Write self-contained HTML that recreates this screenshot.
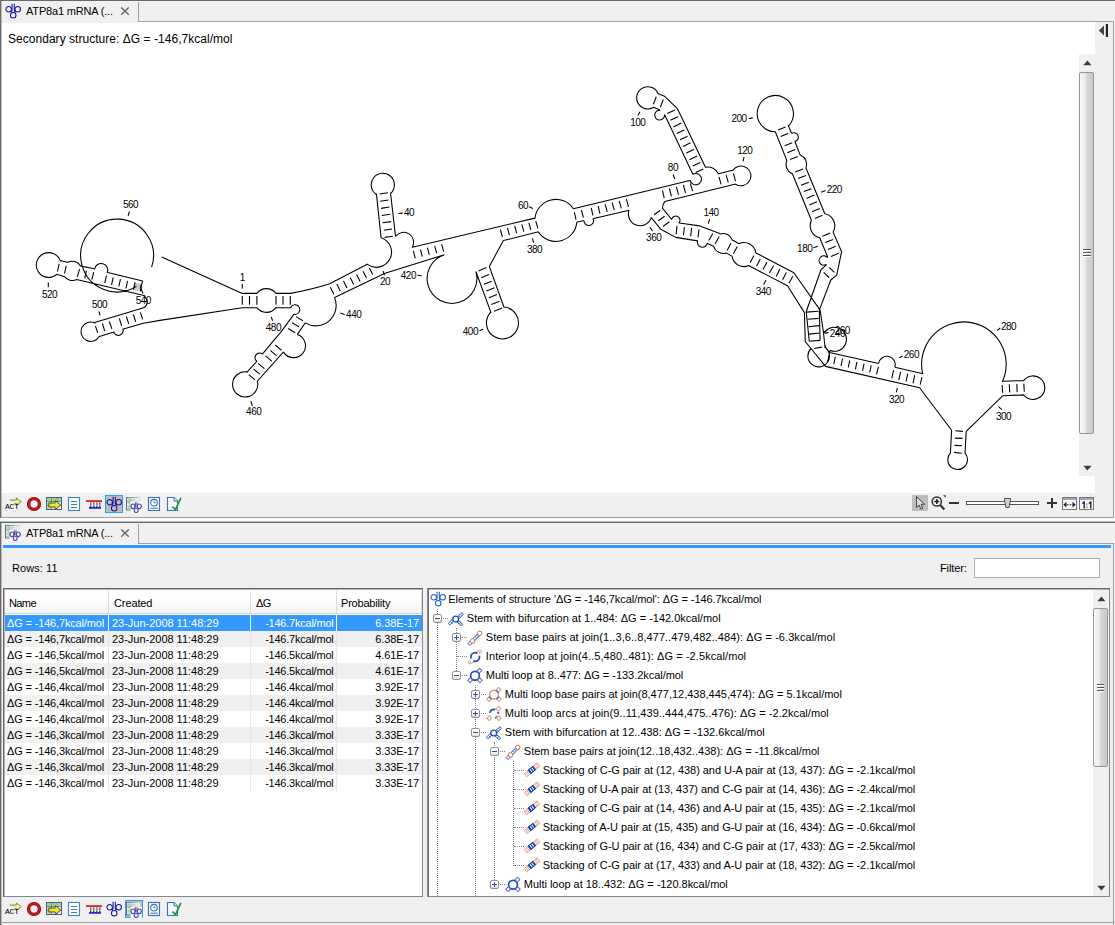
<!DOCTYPE html>
<html>
<head>
<meta charset="utf-8">
<title>ATP8a1 mRNA</title>
<style>
html,body{margin:0;padding:0;}
body{width:1115px;height:925px;overflow:hidden;background:#f0f0f0;font-family:"Liberation Sans",sans-serif;font-size:11px;color:#000;position:relative;}
.a{position:absolute;}
.t{position:absolute;white-space:nowrap;line-height:14px;height:14px;}
.w{color:#fff;}
.ln{position:absolute;background:#a0a0a0;}
.dk{position:absolute;background:#696969;}
.row{position:absolute;left:5px;width:417px;height:16px;}
.vs{position:absolute;width:1px;background:#e3e3e3;}
.dv{position:absolute;width:0;border-left:1px dotted #808080;}
.dh{position:absolute;height:0;border-top:1px dotted #808080;}
.ex{position:absolute;width:7px;height:7px;border:1px solid #919191;border-radius:2px;background:linear-gradient(#fff 0%,#fff 50%,#dcdcdc 100%);}
.ex b{position:absolute;left:1px;top:3px;width:5px;height:1px;background:#2d4f9e;}
.ex i{position:absolute;left:3px;top:1px;width:1px;height:5px;background:#2d4f9e;}
.sb{position:absolute;background:#f0f0f0;}
.th{position:absolute;border:1px solid #979797;border-radius:2px;background:linear-gradient(90deg,#f6f6f6 0%,#ececec 40%,#d6d6d8 52%,#c9c9cc 100%);box-sizing:border-box;}
.gr{position:absolute;height:1px;width:8px;background:#555;box-shadow:0 1px 0 #fff;}
</style>
</head>
<body>
<svg width="0" height="0" style="position:absolute">
<defs>
<symbol id="db" viewBox="0 0 16 16"><g fill="none" stroke="currentColor" stroke-width="1.05"><circle cx="3.7" cy="6.3" r="2.75"/><circle cx="12.700" cy="6.3" r="2.75"/><circle cx="8.2" cy="12.2" r="2.75"/><path d="M7.1 0.8v5.6q0 2-1 3M9.3 0.8v5.6q0 2 1 3"/></g></symbol>
<symbol id="tbldb" viewBox="0 0 16 16"><linearGradient id="tg" x1="0" x2="1" y1="0" y2="0"><stop offset="0" stop-color="#6c6898"/><stop offset="1" stop-color="#d8d8e6"/></linearGradient><rect x="0.5" y="0.5" width="13.5" height="12.5" fill="#f4f4fa" stroke="url(#tg)" stroke-width="1"/><path d="M4.200 1v12M1 4.200h13" stroke="url(#tg)" stroke-width=".7" fill="none"/><path d="M1.500 1.700h2.200v1.900H1.500zM1.500 4.900h2.200v1.900H1.500zM1.500 7.900h2.200v1.900H1.500zM1.500 10.800h2.200v1.700H1.500z" fill="#8cdc74"/><path d="M4.900 1.700h4.300v1.800H4.900z" fill="#a6e694"/><path d="M10 1.700h3.500v1.800H10z" fill="#d6f2cc"/><rect x="4.600" y="4.600" width="11.400" height="11.400" fill="#fff" opacity=".92"/><g fill="none" stroke="#4c48ac" stroke-width="1.150"><ellipse cx="7" cy="9.300" rx="2" ry="2.300"/><ellipse cx="13.300" cy="9.300" rx="2" ry="2.300"/><circle cx="10.200" cy="13.500" r="2"/><path d="M9.300 5.200v5.400M11 5.200v5.400"/></g></symbol>
<symbol id="act" viewBox="0 0 18 16"><path d="M5.500 3.800h6.200V1.900l4.600 3.400-4.600 3.400V7H10" fill="#f3f1a2" stroke="#76762a" stroke-width=".85"/><text x="1" y="12.600" font-family="Liberation Mono, monospace" font-size="7.600" fill="#000" letter-spacing="-0.250">ACT</text></symbol>
<symbol id="ring" viewBox="0 0 16 16"><circle cx="8" cy="8" r="5.400" fill="none" stroke="#7a0d12" stroke-width="3.400"/><circle cx="8" cy="8" r="5.400" fill="none" stroke="#cf1820" stroke-width="2"/></symbol>
<symbol id="tblarrow" viewBox="0 0 16 16"><rect x="0.5" y="1.5" width="15" height="12" fill="#e4efff" stroke="#55558c" stroke-width="1"/><path d="M1 2h4v3H1zM6 2h4.5v3H6zM11.5 2h3.5v3h-3.5z" fill="#8fe07e"/><path d="M1 6h4v3H1zM1 10h4v3H1z" fill="#a8e898"/><path d="M5.5 2v11M11 2v11M1 5.5h14M1 9.5h14" stroke="#55558c" stroke-width=".7" fill="none"/><path d="M2.8 7h6.4V4.6L14.8 9 9.2 13.6V11H2.8z" fill="#e9e533" stroke="#55561e" stroke-width="1"/></symbol>
<symbol id="doc" viewBox="0 0 16 16"><rect x="2.5" y="1.5" width="11" height="13" fill="#fdfeff" stroke="#4a80c4" stroke-width="1.1"/><path d="M5 5.5h6M5 8.5h6M5 11.5h6" stroke="#3d78c2" stroke-width="1"/></symbol>
<symbol id="redblue" viewBox="0 0 16 16"><rect x="0" y="4.2" width="16" height="1.8" fill="#d8232a"/><rect x="3" y="11" width="12" height="1.8" fill="#2a2ad0"/><path d="M4.8 6.5v4.5M7.8 6.5v4.5M10.9 6.5v4.5M13.8 6.5v4.5" stroke="#111" stroke-width="1.1" stroke-dasharray="1.3 .5"/><rect x="6.5" y="14.8" width="3.5" height=".7" fill="#ddd"/></symbol>
<symbol id="clock" viewBox="0 0 16 16"><rect x="2.5" y="1.5" width="11" height="13" fill="#f4f8fd" stroke="#3d72b6" stroke-width="1.1"/><circle cx="8" cy="6.700" r="3.300" fill="#fff" stroke="#3d72b6" stroke-width="1.100"/><path d="M8 4.600v2.200h1.800" stroke="#3d72b6" stroke-width=".9" fill="none"/><path d="M4.4 12.2h7.4" stroke="#3d72b6" stroke-width="1"/></symbol>
<symbol id="check" viewBox="0 0 16 16"><path d="M1.5 1.5h6.5l3.5 3.5v9.500h-10z" fill="#f8fbff" stroke="#3d72b6" stroke-width="1.1"/><path d="M8 1.500v3.500h3.500" fill="#dfe9f6" stroke="#3d72b6" stroke-width="1"/><path d="M6.400 10.700l3 3L14.900 1.800" fill="none" stroke="#1e9a36" stroke-width="1.700"/></symbol>
<symbol id="bif" viewBox="0 0 16 16"><g stroke="#1f4fc0" fill="#fff" stroke-width="1"><path d="M9.200 6.300l4.600-4.600 1.600 1.600-4.600 4.600zM6.400 9.300l-4.600 4.600-1.500-1.500 4.600-4.600zM9.700 8.800l5 4.300-1.400 1.600-5-4.300z"/><path d="M10.900 4.700l1.600 1.600M12.400 3.200l1.600 1.600M4.700 9.400l1.500 1.500M3 11l1.600 1.600M11 10l-1.400 1.600M12.800 11.500l-1.400 1.600" fill="none" stroke-width=".8"/><circle cx="7.700" cy="8" r="2.900" stroke-width="1.300"/></g></symbol>
<symbol id="stembp" viewBox="0 0 16 16"><g fill="#fff" stroke-width="1"><path d="M1 13.600l9.800-9.800 1.900 1.900-9.800 9.800z" stroke="#1f4fc0"/><path d="M3.300 11.300l1.900 1.900M8 6.600l1.900 1.900M9.500 5.100l1.900 1.900" stroke="#1f4fc0" fill="none" stroke-width=".8"/><circle cx="5.600" cy="10.900" r="2.300" stroke="#c4703c"/><circle cx="12.700" cy="3.300" r="2.200" stroke="#c4703c"/></g></symbol>
<symbol id="intloop" viewBox="0 0 16 16"><g fill="none"><path d="M9.500 3l3.800-2.300 1.600 2.200-3.400 2.800M6.200 13l-3.800 2.300-1.600-2.200 3.400-2.800M11.300 1.800l1.500 2.200M12.800 1l1.500 2.200M4.500 14.200l-1.500-2.200M3 15l-1.500-2.200" stroke="#e8a890" stroke-width="1"/><circle cx="8.200" cy="8" r="4.300" stroke="#1f4fc0" stroke-width="1.800" stroke-dasharray="10.5 3" stroke-dashoffset="1.9"/></g></symbol>
<symbol id="multi" viewBox="0 0 16 16"><circle cx="8" cy="7.700" r="4.400" fill="none" stroke="#1f4fc0" stroke-width="1.700"/><g fill="#fff" stroke="#5868b8" stroke-width="1"><rect x="10.800" y="0.900" width="3.200" height="3.600" transform="rotate(45 12.400 2.700)"/><rect x="1.600" y="10.400" width="3.200" height="3.600" transform="rotate(45 3.200 12.200)"/><rect x="11.200" y="10.400" width="3.200" height="3.600" transform="rotate(-45 12.800 12.200)"/></g></symbol>
<symbol id="multibp" viewBox="0 0 16 16"><circle cx="8" cy="7.700" r="4.400" fill="none" stroke="#d4967c" stroke-width="1.500"/><g fill="#fff" stroke="#d4967c" stroke-width="1"><rect x="10.800" y="0.900" width="3.200" height="3.600" transform="rotate(45 12.400 2.700)"/><rect x="1.600" y="10.400" width="3.200" height="3.600" transform="rotate(45 3.200 12.200)"/><rect x="11.200" y="10.400" width="3.200" height="3.600" transform="rotate(-45 12.800 12.200)"/></g><path d="M10 3.200l2.600 2.600M2.800 9.600l2.600 2.600M13.200 9.600l-2.600 2.600" stroke="#4a6ed8" stroke-width="1.300"/></symbol>
<symbol id="multiarc" viewBox="0 0 16 16"><circle cx="8" cy="7.700" r="4.300" fill="none" stroke="#1f4fc0" stroke-width="1.800" stroke-dasharray="7 3.500 2 3.500 2.500 8.500" stroke-dashoffset="-14"/><g fill="#fff" stroke="#d4967c" stroke-width="1"><rect x="10.800" y="0.900" width="3.200" height="3.600" transform="rotate(45 12.400 2.700)"/><rect x="1.600" y="10.400" width="3.200" height="3.600" transform="rotate(45 3.200 12.200)"/><rect x="11.200" y="10.400" width="3.200" height="3.600" transform="rotate(-45 12.800 12.200)"/></g></symbol>
<symbol id="stack" viewBox="0 0 16 16"><g fill="#fff" stroke-width="1"><path d="M0.200 11.500L13.200 0.800l2.700 3.300L2.800 14.800z" stroke="#e4a488"/><path d="M1.330 10.420l2.780 3.400M2.650 9.340l2.780 3.400M10.570 2.860l2.780 3.400M11.890 1.780l2.780 3.400" stroke="#e4a488" fill="none"/><path d="M3.970 8.260L8.990 4.160l2.780 3.400-5.020 4.100z" stroke="#1040b0" fill="#1040b0"/><path d="M6.070 7.320l2.020 2.480M7.780 5.910l2.020 2.480" stroke="#fff" fill="none" stroke-width="1.050"/></g></symbol>
</defs>
</svg>

<div class="dk" style="left:0;top:0;width:1115px;height:1px;"></div>
<div class="dk" style="left:0;top:0;width:1px;height:518px;"></div>
<div class="a" style="left:1px;top:1px;width:1px;height:517px;background:#bcbcbc;"></div>
<div class="ln" style="left:138px;top:21px;width:976px;height:1px;"></div>
<div class="ln" style="left:138px;top:2px;width:1px;height:20px;"></div>
<div class="ln" style="left:1113px;top:21px;width:1px;height:497px;"></div>
<div class="ln" style="left:2px;top:517px;width:1112px;height:1px;"></div>
<div class="a" id="canvas" style="left:2px;top:22px;width:1093px;height:471px;background:#fff;"></div>
<div class="a" style="left:2px;top:22px;width:136px;height:1px;background:#f0f0f0;"></div>
<svg class="a" style="left:0;top:0;" width="1115" height="925" viewBox="0 0 1115 925">
<rect x="133.4" y="283.2" width="7.2" height="7.2" fill="#c9c9c9" transform="rotate(14 137 286.8)"/>
<g fill="none" stroke="#000" stroke-width="1.08" stroke-linecap="butt" stroke-linejoin="round">
<path d="M151.6 267.1 A36.4 36.4 0 1 0 136.4 286.4 M161.7 256.9 L242.3 293.4 M57.4 274.5 L57.1 274.2 A12.4 12.4 0 1 1 60.4 260.9 L60.6 260.8 M60.6 260.8 L67.4 262.2 M57.4 274.5 L63.9 276.4 M67.4 262.2 L67.6 262.5 A9.6 9.6 0 0 1 80.4 265.8 L80.2 265.9 M76.7 279.5 L76.7 279.4 A9.6 9.6 0 0 1 64.3 276.2 L63.9 276.4 M80.2 265.9 L94 268.8 M94 268.8 L94.6 269 A6.6 6.6 0 1 1 107.3 272.4 L107.7 272.5 M107.7 272.5 L142.7 281.1 M76.7 279.5 L145 295.8 M142.7 281.1 L140.6 287.5 L143 293.5 M145 295.8 L144.4 296.6 A6.4 6.4 0 0 1 142.1 308.2 L142.1 308.3 M142.1 308.3 L95.4 322.3 M95.4 322.3 L95 323 A9.7 9.7 0 1 0 99.3 336.3 L99.5 336.4 M99.5 336.4 L113 332.3 M113 332.3 L113.7 332 A4.8 4.8 0 0 0 122.9 329.1 L123.4 329 M123.4 329 L143.3 323.2 L160 320.4 L242.3 307.7 M242.3 293.4 L256.9 293.4 M242.3 307.7 L256.9 307.7 M256.9 293.4 L256.9 293.4 A11.9 11.9 0 0 1 276 293.4 L276 293.4 M276 307.7 L275.9 307.6 A11.9 11.9 0 0 1 256.9 307.7 L256.9 307.7 M276 293.4 L290.6 293.4 M276 307.7 L290.6 307.7 M290.6 293.4 Q312 289.5 329.7 283.8 M290.6 307.7 L290.5 307.7 A4.8 4.8 0 1 1 293.6 314.2 L293.5 314.5 M293.5 314.9 L281.2 331.6 L263.4 352.8 M305.3 322.8 L297.4 334.4 M297.4 334.4 L297.4 334.5 A11.9 11.9 0 1 1 283.5 352.1 L283.1 352.4 M283.1 352.4 L257.5 381 M263.4 352.8 L262.3 354 A4.5 4.5 0 1 0 256.8 361.2 L256.5 361.7 M256.5 361.7 L246.6 372.6 M246.6 372.6 L246.7 371.9 A12.6 12.6 0 1 0 257.3 381 L257.5 381 M305.3 322.8 L305.2 322.9 A20.4 20.4 0 0 0 334.5 297.4 L335.6 296.9 M329.7 283.8 L367.7 263.9 M335.6 296.9 L385 273.3 M381.1 238 L381.2 237.7 A15.2 15.2 0 1 1 367.4 264.4 L367.7 263.9 M376.4 193.6 L381.1 238 M390.5 192.8 L395.5 236.2 M376.4 193.6 L375.9 194.2 A11.6 11.6 0 1 1 390.9 193.2 L390.5 192.8 M395.5 236.2 L395.7 236.3 A9.9 9.9 0 0 1 412.2 247.2 L412.4 247.3 M412.4 247.3 L534.9 218.1 M385 273.3 L444.4 254.8 M444.4 254.8 L444.4 254.8 A24.9 24.9 0 1 0 475.9 271.5 L475.9 271.5 M475.9 271.5 L491.1 312.9 M489.3 266.4 L504 307.3 M491.1 312.9 L490.5 312.3 A16 16 0 1 0 504 307 L504 307.3 M489.3 266.4 L503.4 240.6 M503.4 240.6 L538.4 231.8 M534.9 218.1 L535 218.1 A21 21 0 0 1 573.4 208.8 L573.4 208.8 M576.4 222.2 L576.8 222.2 A21 21 0 0 1 538.3 231.9 L538.4 231.8 M573.4 208.8 L689.9 180.4 M576.4 222.2 L584 220.5 M584 220.5 L584 220.5 A4.8 4.8 0 1 0 593.2 218.8 L593.9 218.5 M593.9 218.5 L629.1 210.2 M629.1 210.2 L629 210.2 A11.7 11.7 0 0 0 651.2 217.7 L651.3 217.7 M664.8 201.4 L735.7 184 M664.8 201.4 Q662.6 204.5 662.4 208.2 M662.4 208.2 L671.8 219.5 M651.3 217.7 L660.7 229.2 M671.8 219.5 L671.7 219.5 A4.2 4.2 0 1 1 679.1 222.9 L679.3 223 M679.3 223 L699.8 225.9 L719.8 233.6 M660.7 229.2 L675.8 237.4 L697.5 240.9 M697.5 240.9 L697.6 240.9 A5 5 0 0 0 707.3 243.4 L707.5 243.5 M707.5 243.5 L713.9 246.5 M719.8 233.6 L720 234.1 A9.9 9.9 0 0 1 732.4 240.1 L732.6 240 M726.2 252.9 L726.2 252.9 A9.9 9.9 0 0 1 713.7 246.6 L713.9 246.5 M732.6 240 L738.5 243.5 M726.2 252.9 L732.3 256.4 M738.5 243.5 L738.7 243.8 A12 12 0 0 1 755.9 252.9 L756 252.9 M749 265.7 L748.9 265.5 A12 12 0 0 1 732.1 256.4 L732.3 256.4 M756 252.9 L793.9 272.7 L819.6 309.4 M749 265.7 L787.5 285.8 L804.4 312.6 M692.7 173.9 L692.9 174.2 A5.7 5.7 0 1 1 690.2 180.5 L689.9 180.6 M692.7 174 L664.7 114.7 M705.6 167.6 L677.6 108.9 M677.6 108.9 L664.7 96.3 L658.3 93.7 M664.7 114.7 L664.5 114.7 A4.9 4.9 0 1 1 660 110.2 L660 110 M660 110 L653 107.1 M653 107.1 L653.2 107.5 A11.1 11.1 0 1 1 658.1 93.8 L658.3 93.7 M705.6 167.6 L705.5 167.3 A11.5 11.5 0 0 1 718.3 173.8 L718.6 173.7 M718.6 173.7 L732.5 170.3 M732.5 170.3 L732.7 170.5 A9.9 9.9 0 1 1 735.6 184.2 L735.7 184 M788.1 125.3 L788.7 125.8 A18.1 18.1 0 1 0 775.3 131.7 L775.3 131.7 M775.3 131.7 L787 160.9 M788.1 125.3 L791.1 132.3 M791.1 132.3 L791.7 133.3 A4.5 4.5 0 1 1 795 141.6 L795.1 142 M795.1 142 L800.2 155.1 M800.2 155.1 L800.3 154.9 A10.3 10.3 0 0 1 806.1 167.4 L805.7 167.3 M792.2 173.2 L792 173.7 A10.3 10.3 0 0 1 786.7 160.8 L787 160.9 M792.2 173.2 L811.4 220.2 M805.7 167.3 L824.8 213.8 M824.8 213.8 L824.8 213.7 A12.3 12.3 0 0 1 833.1 232 L833 231.9 M819.6 237.5 L819.5 237.7 A12.3 12.3 0 0 1 811.5 220.3 L811.4 220.2 M819.6 237.5 L827.7 257 M833 231.9 L841.6 251.8 L836.7 275.1 L830.8 280 L819.6 309.4 M827.7 257 L827.2 257.5 A4.6 4.6 0 1 0 826.1 264.4 L826.4 264.9 M826.4 264.9 L821 269.7 L806.2 311.8 M804.4 312.6 L805.3 341.7 L810.6 348 L825.5 366.4 M806.2 311.8 L809.3 341.3 M819.3 309.6 L820.1 340.4 M820.1 309.9 L823.2 330.5 L825 346.7 L829.3 352.3 M823.4 331.5 L824.6 332.4 A12 12 0 1 1 830.2 350.5 L829.5 352.3 M811 348.5 L811 348.5 A10.8 10.8 0 1 0 824.8 347.2 L826 345.5 M829.5 352.5 L878.7 363.5 M825.5 366.4 L919.6 387.7 M878.7 363.5 L878.7 363.5 A8.3 8.3 0 1 1 894.8 367.2 L894.8 367.2 M894.8 367.2 L923.1 373.7 M923.1 373.7 L922.7 373.8 A42.3 42.3 0 1 1 1002.5 381.5 L1001.9 381.2 M1001.9 381.2 L1023.5 380.5 M1002.6 395.8 L1024.2 394.9 M1023.5 380.5 L1023.6 380.6 A11.8 11.8 0 1 1 1023.9 395.2 L1024.2 394.9 M1002.6 395.8 L966.2 431.4 M919.6 387.7 L951.6 430.3 M951.6 430.3 L950.4 452.7 M966.2 431.4 L965 453.5 M950.4 452.7 L950.5 452.8 A9.9 9.9 0 1 0 965.2 453.3 L965 453.5"/>
<path d="M59.2 263.9 L57.4 271.5 M66.2 265.9 L64.5 273.3 M79.6 269.2 L77.3 276.8 M86.4 270.6 L84.7 278.3 M93.7 272.1 L91.9 279.7 M106.5 275.6 L104.7 283.2 M113.2 277.4 L111.5 285 M120.5 279.1 L118.8 286.5 M127.5 280.9 L126 288.5 M135.1 282.3 L133.4 289.6 M141.5 284.4 L140.4 291.4 M140.4 312.4 L142.7 319.4 M133.4 314.5 L135.7 321.8 M126.4 316.5 L128.7 323.9 M119.3 318.5 L121.7 325.8 M109.4 321.5 L111.8 328.8 M102.4 323.5 L104.7 330.9 M95.4 325.8 L97.7 332.9 M242.3 296.1 L242.3 304.8 M249.5 296.1 L249.5 304.8 M256.9 296.1 L256.9 304.8 M276 296.1 L276 304.8 M283 296.1 L283 304.8 M290.3 296.1 L290.3 304.8 M296 316.6 L302.9 320.8 M292 322.6 L298.9 326.7 M288.1 328.5 L295.2 332.8 M275.2 345 L281.7 350.4 M270.3 350.4 L276.7 355.8 M265.4 355.8 L271.8 361.2 M258 363.4 L264.4 368.6 M253.5 369.1 L260 374.1 M248.8 374.6 L255 379.8 M330.3 287.3 L333.8 294.3 M336.8 284.1 L340.3 291.2 M343.5 280.9 L347 287.9 M350.2 277.6 L353.7 284.6 M356.6 274.5 L360.1 281.5 M363 271.3 L366.5 278 M369.5 268 L372.7 274.5 M379.7 194 L387.9 192.8 M380.3 201.2 L388.5 200 M381.1 208.4 L389.3 207 M381.8 215.5 L390.2 214.3 M382.7 222.8 L391.2 221.6 M383.8 230.2 L392 229 M384.6 237.4 L392.8 236.2 M413.3 250.8 L415.3 258.4 M420.4 249.3 L422.3 256.7 M427.4 247.7 L429.3 254.9 M434.6 245.8 L436.7 253.2 M441.6 244.2 L443.7 251.7 M478.5 270.9 L486.4 267.6 M481.2 277.7 L489 274.4 M483.9 284.3 L491.7 281.2 M486.4 291 L494.4 287.8 M489 297.7 L496.9 294.6 M491.3 304.5 L499.5 301.2 M494 311.2 L502.2 308 M500.4 229.5 L502.4 236.8 M507.4 227.8 L509.4 235.1 M514.7 226 L516.7 233.3 M521.8 224.3 L523.8 231.6 M528.8 222.6 L530.9 229.8 M535.8 221.1 L537.8 228.3 M574.4 212.3 L576 219.7 M581.4 210 L583.4 217.6 M591.2 207.8 L592.9 215.4 M598.2 206.1 L599.9 213.7 M605.2 204.3 L607.2 211.9 M612.2 202.6 L614.2 210.1 M619.2 200.8 L621.3 208.4 M626.4 199.1 L628.5 206.9 M662.4 190.3 L664.2 198.1 M669.4 188.5 L671.4 196.4 M676.4 186.8 L678.5 194.6 M683.4 185 L685.5 192.9 M690.4 183.5 L692.5 191.1 M654 214.8 L660.1 210.5 M658.3 220.7 L664.7 216.3 M663 226.5 L669.4 221.8 M677 225.9 L676.2 234.3 M684.4 227.1 L683.4 235.3 M691.6 228 L690.7 236.2 M699 229.2 L698 237.4 M712.8 233.6 L708.7 240.6 M719.2 236.5 L715.1 244.1 M730.9 243.3 L727.1 250.6 M737.3 246.5 L733.4 253.8 M754 255.5 L750.1 262.8 M760.3 259 L756.6 266 M766.9 262.2 L763 269.6 M773.5 265.7 L769.4 273.1 M779.9 269 L776.2 276.5 M786.4 272.5 L782.6 279.7 M792.8 276.2 L789 283.3 M667.3 113.5 L675 110 M670.3 120.3 L678.1 116.7 M673.5 127 L681.3 123.1 M676.6 133.4 L684.3 129.9 M679.9 139.8 L687.5 136.3 M683 146.5 L690.6 142.7 M686.3 153 L693.9 149.4 M689.5 159.7 L697.1 155.9 M692.7 166.1 L700.3 162.4 M695.7 172.5 L703.3 169 M656.3 96.6 L653.4 104.2 M663.3 99.5 L660.4 107.1 M719 176.8 L721.1 184.4 M726.2 175.2 L728.3 182.6 M733.4 173.4 L735.5 181.1 M778 130 L785.5 127 M780.6 136.4 L788.1 133.5 M784.6 145.7 L792.2 142.8 M787.3 152.7 L795.1 149.6 M790.1 159.5 L797.8 156.5 M795.1 172 L803 168.9 M798.1 178.4 L805.9 175.5 M801 185.2 L808.8 182.2 M803.9 191.5 L811.5 188.7 M806.5 198.4 L814.3 195.1 M809.3 205 L817 201.8 M812 211.8 L819.8 208.5 M814.9 218.5 L822.5 215.3 M822.5 236.3 L830.1 233.1 M825.2 242.6 L833 239.5 M828 249.4 L835.7 246.2 M831 256.4 L838.8 253.2 M829 267.3 L834.4 272.4 M823.7 272.4 L829 277.5 M806.6 312.1 L818.3 311.2 M807.5 319.3 L818.7 318.4 M808.4 326.8 L819.2 325.6 M808.9 334.1 L819.6 333 M809.3 341.3 L820.1 340.4 M814.2 348.5 L821.9 347.1 M829 355.2 L827.7 361.9 M835.3 357 L833.8 364.2 M842.5 358.5 L841 366 M849.7 360.3 L848.3 367.5 M856.9 361.9 L855.4 369.3 M864.1 363.6 L862.5 370.9 M871.2 365.4 L869.7 372.5 M878.4 366.9 L876.6 374.3 M893.6 370.1 L891.8 378.3 M900.6 371.9 L898.8 380.1 M907.7 373.7 L906.1 381.5 M914.7 375.2 L913.1 383.3 M921.9 377.2 L920.2 384.7 M1002.2 385 L1002.6 392.7 M1009.3 384.3 L1009.7 392.4 M1016.8 384.1 L1017.2 392.2 M1023.8 383.6 L1024.3 391.8 M955.3 430.8 L962.8 431.4 M954.9 438.1 L962.6 438.4 M954.5 445.4 L962 445.8 M954.1 452.4 L961.8 453.3"/>
<path d="M129.5 211.5 L128.1 215.8 M48.3 282.6 L48.3 287.3 M98.9 311.5 L100.1 315.3 M242.3 284.1 L242.3 288.5 M271.2 316.9 L272.6 320.8 M250.9 401.2 L252.3 406 M340.3 313 L344.7 314.4 M383.1 271 L384.5 275.3 M398.4 213.5 L402.8 213.1 M417.5 275.3 L421.6 275.8 M479.4 330.7 L483.2 329.3 M529.1 206.8 L532.8 208.6 M532.3 238.3 L533.7 242.7 M649.8 227.3 L652.5 230.8 M673.2 174.5 L674.7 179 M709.6 219.2 L708.3 223.7 M765.9 280.3 L763.6 284.4 M640 111.8 L637.8 115.6 M744 157.2 L743.1 161.4 M748.8 118.6 L752.8 117.9 M821.2 192.3 L825.5 190.6 M813.5 247.7 L817.8 246.2 M824.6 333.4 L828.6 332.5 M899.1 357.7 L902.6 356.1 M897.4 388 L896.2 392.3 M997.2 330.5 L1000.3 327.8 M998.5 406.6 L1001.9 409.6"/>
</g>
<g font-family="Liberation Sans, sans-serif" font-size="10" text-anchor="middle" fill="#000" letter-spacing="-0.5">
<text x="130.5" y="208.2">560</text>
<text x="49.5" y="298.4">520</text>
<text x="143.3" y="304.2">540</text>
<text x="99.5" y="308.3">500</text>
<text x="242.3" y="281.3">1</text>
<text x="273.4" y="331.3">480</text>
<text x="253.7" y="415.3">460</text>
<text x="353.7" y="318.4">440</text>
<text x="385" y="285.4">20</text>
<text x="409.1" y="216.4">40</text>
<text x="408.4" y="278.7">420</text>
<text x="470.4" y="335.1">400</text>
<text x="523" y="209.3">60</text>
<text x="534.5" y="253">380</text>
<text x="653.7" y="241.1">360</text>
<text x="672.9" y="171.2">80</text>
<text x="711" y="216.3">140</text>
<text x="763.3" y="295.1">340</text>
<text x="637.8" y="126.4">100</text>
<text x="744.8" y="154.3">120</text>
<text x="739" y="122.3">200</text>
<text x="834.3" y="193.2">220</text>
<text x="804.7" y="252.2">180</text>
<text x="837.4" y="336.5">240</text>
<text x="842.3" y="334.2">260</text>
<text x="911.4" y="358.3">260</text>
<text x="896.6" y="403.4">320</text>
<text x="1008.6" y="330.3">280</text>
<text x="1003.5" y="420.1">300</text>
</g>
</svg>
<svg class="a" style="left:5px;top:3px;color:#10109a" width="16" height="16"><use href="#db"/></svg>
<div class="t" id="tab1" style="left:26px;top:4px;letter-spacing:-0.177px;">ATP8a1 mRNA (...</div>
<svg class="a" style="left:120px;top:7px" width="10" height="10"><path d="M1.200 0.400l7.600 7.400M8.800 0.400l-7.600 7.400" stroke="#6e6e6e" stroke-width="1.500" fill="none"/></svg>
<div class="t" id="sec" style="left:8px;top:32px;letter-spacing:0.035px;font-size:12px;">Secondary structure: ΔG = -146,7kcal/mol</div>
<svg class="a" style="left:1097px;top:23px" width="14" height="16"><path d="M7 2.600v9.800L1.800 7.500z" fill="#444"/><rect x="8.800" y="1" width="2.200" height="13" fill="#222"/></svg>
<div class="sb" style="left:1079px;top:54px;width:16px;height:422px;"></div>
<div class="th" style="left:1079px;top:72px;width:15px;height:362px;"></div>
<div class="gr" style="left:1083px;top:249px;"></div>
<div class="gr" style="left:1083px;top:252px;"></div>
<div class="gr" style="left:1083px;top:255px;"></div>
<svg class="a" style="left:1083px;top:60px" width="9" height="6"><path d="M0.300 5.300L4.400 0.600 8.500 5.300z" fill="#3c3c3c"/></svg>
<svg class="a" style="left:1083px;top:465px" width="9" height="6"><path d="M0.300 0.700L4.400 5.400 8.500 0.700z" fill="#3c3c3c"/></svg>
<div class="a" style="left:105px;top:495px;width:16px;height:16px;background:#bdbdbd;border:1px solid #3399ff;"></div>
<svg class="a" style="left:4px;top:496px" width="19" height="17"><use href="#act"/></svg>
<svg class="a" style="left:26px;top:496px" width="16" height="16"><use href="#ring"/></svg>
<svg class="a" style="left:46px;top:496px" width="16" height="16"><use href="#tblarrow"/></svg>
<svg class="a" style="left:66px;top:496px" width="16" height="16"><use href="#doc"/></svg>
<svg class="a" style="left:86px;top:496px" width="16" height="16"><use href="#redblue"/></svg>
<svg class="a" style="left:106px;top:496px;color:#14149c" width="16" height="16"><use href="#db"/></svg>
<svg class="a" style="left:126px;top:497px" width="16" height="16"><use href="#tbldb"/></svg>
<svg class="a" style="left:146px;top:496px" width="16" height="16"><use href="#clock"/></svg>
<svg class="a" style="left:166px;top:496px" width="16" height="16"><use href="#check"/></svg>
<div class="a" style="left:912px;top:495px;width:16px;height:16px;background:#bdbdbd;"></div>
<svg class="a" style="left:912px;top:494px" width="18" height="18"><path d="M4.500 2.500v11l2.600-2.400 1.800 4 1.900-.9-1.800-3.900h3.500z" fill="#d8d8d8" stroke="#444" stroke-width="1"/></svg>
<svg class="a" style="left:930px;top:494px" width="18" height="18"><circle cx="6.800" cy="7.500" r="4.600" fill="#f4f4f4" stroke="#333" stroke-width="1.500"/><path d="M4.300 7.500h5M6.800 5v5" stroke="#222" stroke-width="1.500"/><path d="M10.200 11l4.200 4.600" stroke="#333" stroke-width="2.200"/><path d="M13 1.200h2.600v2.600z" fill="#333"/></svg>
<div class="a" style="left:949px;top:502px;width:10px;height:2px;background:#333;"></div>
<div class="a" style="left:966px;top:501px;width:71px;height:2px;background:#fff;border:1px solid #555;"></div>
<svg class="a" style="left:1003px;top:497px" width="10" height="12"><path d="M1.500 1.500h6v1.500L6 10.500H3L1.500 3z" fill="#d2d2d2" stroke="#4f4f4f" stroke-width="1"/></svg>
<div class="a" style="left:1047px;top:502px;width:10px;height:2px;background:#333;"></div>
<div class="a" style="left:1051px;top:498px;width:2px;height:10px;background:#333;"></div>
<svg class="a" style="left:1062px;top:497px" width="15" height="13"><rect x="0.500" y="0.500" width="14" height="12" fill="#f6f6f6" stroke="#777"/><rect x="1" y="1" width="13" height="2" fill="#a4a4bc"/><path d="M5 7.700h5" stroke="#222" stroke-width="1.100" stroke-dasharray="1.600 1.100"/><path d="M1.300 7.700l3.200-2.900v5.800zM13.700 7.700l-3.200-2.900v5.800z" fill="#222"/></svg>
<svg class="a" style="left:1079px;top:497px" width="16" height="13"><rect x="0.500" y="0.500" width="14" height="12" fill="#f6f6f6" stroke="#777"/><rect x="1" y="1" width="13" height="2" fill="#a4a4bc"/><path d="M3.300 6.600l1.900-1.500v6.300M9.900 6.600l1.900-1.500v6.300" stroke="#1c1c1c" stroke-width="1.300" fill="none"/><path d="M7.200 7.200h1.200M7.200 10.200h1.200" stroke="#555" stroke-width="1.200"/></svg>
<div class="a" style="left:0;top:518px;width:1115px;height:3px;background:#fbfbfb;"></div>
<div class="a" style="left:0;top:521px;width:1115px;height:1px;background:#b9b9b9;"></div>
<div class="dk" style="left:0;top:522px;width:1115px;height:1px;"></div>
<div class="dk" style="left:0;top:522px;width:1px;height:403px;"></div>
<div class="a" style="left:1px;top:523px;width:1px;height:402px;background:#bcbcbc;"></div>
<div class="ln" style="left:138px;top:543px;width:976px;height:1px;"></div>
<div class="ln" style="left:138px;top:524px;width:1px;height:20px;"></div>
<div class="ln" style="left:1113px;top:543px;width:1px;height:382px;"></div>
<div class="a" style="left:3px;top:545px;width:1108px;height:3px;background:#3399ff;"></div>
<svg class="a" style="left:5px;top:525px" width="16" height="16"><use href="#tbldb"/></svg>
<div class="t" id="tab2" style="left:26px;top:526px;letter-spacing:-0.177px;">ATP8a1 mRNA (...</div>
<svg class="a" style="left:120px;top:529px" width="10" height="10"><path d="M1.200 0.400l7.600 7.400M8.800 0.400l-7.600 7.400" stroke="#6e6e6e" stroke-width="1.500" fill="none"/></svg>
<div class="t" id="rows" style="left:12px;top:561px;letter-spacing:0.079px;">Rows: 11</div>
<div class="t" id="filt" style="left:940px;top:561px;letter-spacing:-0.117px;">Filter:</div>
<div class="a" style="left:974px;top:558px;width:124px;height:18px;background:#fff;border:1px solid #abadb3;"></div>
<div class="a" style="left:3px;top:588px;width:420px;height:309px;background:#b4b4b4;"></div>
<div class="a" style="left:3px;top:588px;width:420px;height:1px;background:#696969;"></div>
<div class="a" style="left:3px;top:588px;width:1px;height:309px;background:#696969;"></div>
<div class="a" style="left:5px;top:590px;width:417px;height:306px;background:#fff;"></div>
<div class="a" style="left:422px;top:589px;width:1px;height:308px;background:#828790;"></div>
<div class="a" style="left:4px;top:896px;width:419px;height:1px;background:#828790;"></div>
<div class="a" style="left:5px;top:597px;width:417px;height:17px;background:linear-gradient(#fff,#f1f2f4);"></div>
<div class="a" style="left:5px;top:613px;width:417px;height:1px;background:#d5d5d5;"></div>
<div class="vs" style="left:108px;top:591px;height:22px;background:#dcdcdc;"></div>
<div class="vs" style="left:250px;top:591px;height:22px;background:#dcdcdc;"></div>
<div class="vs" style="left:336px;top:591px;height:22px;background:#dcdcdc;"></div>
<div class="vs" style="left:421px;top:591px;height:22px;background:#dcdcdc;"></div>
<div class="t" id="h1" style="left:9px;top:596px;letter-spacing:-0.600px;">Name</div>
<div class="t" id="h2" style="left:114px;top:596px;letter-spacing:-0.107px;">Created</div>
<div class="t" id="h3" style="left:256px;top:596px;letter-spacing:-0.600px;">ΔG</div>
<div class="t" id="h4" style="left:341px;top:596px;letter-spacing:-0.196px;">Probability</div>
<div class="row" style="top:615px;background:#3399ff;"></div>
<div class="vs" style="left:108px;top:615px;height:16px;background:#fff;"></div>
<div class="vs" style="left:250px;top:615px;height:16px;background:#fff;"></div>
<div class="vs" style="left:336px;top:615px;height:16px;background:#fff;"></div>
<div class="t w" id="r0a" style="left:7px;top:616px;letter-spacing:-0.155px;">ΔG = -146,7kcal/mol</div>
<div class="t w" id="r0b" style="left:112px;top:616px;letter-spacing:-0.017px;">23-Jun-2008 11:48:29</div>
<div class="t w" id="r0c" style="right:781.5px;top:616px;letter-spacing:-0.227px;">-146.7kcal/mol</div>
<div class="t w" id="r0d" style="right:696px;top:616px;letter-spacing:-0.108px;">6.38E-17</div>
<div class="row" style="top:631px;background:#f0f0f0;"></div>
<div class="vs" style="left:108px;top:631px;height:16px;background:#e6e6e6;"></div>
<div class="vs" style="left:250px;top:631px;height:16px;background:#e6e6e6;"></div>
<div class="vs" style="left:336px;top:631px;height:16px;background:#e6e6e6;"></div>
<div class="t" id="r1a" style="left:7px;top:632px;letter-spacing:-0.155px;">ΔG = -146,7kcal/mol</div>
<div class="t" id="r1b" style="left:112px;top:632px;letter-spacing:-0.017px;">23-Jun-2008 11:48:29</div>
<div class="t" id="r1c" style="right:781.5px;top:632px;letter-spacing:-0.227px;">-146.7kcal/mol</div>
<div class="t" id="r1d" style="right:696px;top:632px;letter-spacing:-0.108px;">6.38E-17</div>
<div class="row" style="top:647px;background:#fff;"></div>
<div class="vs" style="left:108px;top:647px;height:16px;background:#e6e6e6;"></div>
<div class="vs" style="left:250px;top:647px;height:16px;background:#e6e6e6;"></div>
<div class="vs" style="left:336px;top:647px;height:16px;background:#e6e6e6;"></div>
<div class="t" id="r2a" style="left:7px;top:648px;letter-spacing:-0.155px;">ΔG = -146,5kcal/mol</div>
<div class="t" id="r2b" style="left:112px;top:648px;letter-spacing:-0.017px;">23-Jun-2008 11:48:29</div>
<div class="t" id="r2c" style="right:781.5px;top:648px;letter-spacing:-0.227px;">-146.5kcal/mol</div>
<div class="t" id="r2d" style="right:696px;top:648px;letter-spacing:-0.108px;">4.61E-17</div>
<div class="row" style="top:663px;background:#f0f0f0;"></div>
<div class="vs" style="left:108px;top:663px;height:16px;background:#e6e6e6;"></div>
<div class="vs" style="left:250px;top:663px;height:16px;background:#e6e6e6;"></div>
<div class="vs" style="left:336px;top:663px;height:16px;background:#e6e6e6;"></div>
<div class="t" id="r3a" style="left:7px;top:664px;letter-spacing:-0.155px;">ΔG = -146,5kcal/mol</div>
<div class="t" id="r3b" style="left:112px;top:664px;letter-spacing:-0.017px;">23-Jun-2008 11:48:29</div>
<div class="t" id="r3c" style="right:781.5px;top:664px;letter-spacing:-0.227px;">-146.5kcal/mol</div>
<div class="t" id="r3d" style="right:696px;top:664px;letter-spacing:-0.108px;">4.61E-17</div>
<div class="row" style="top:679px;background:#fff;"></div>
<div class="vs" style="left:108px;top:679px;height:16px;background:#e6e6e6;"></div>
<div class="vs" style="left:250px;top:679px;height:16px;background:#e6e6e6;"></div>
<div class="vs" style="left:336px;top:679px;height:16px;background:#e6e6e6;"></div>
<div class="t" id="r4a" style="left:7px;top:680px;letter-spacing:-0.155px;">ΔG = -146,4kcal/mol</div>
<div class="t" id="r4b" style="left:112px;top:680px;letter-spacing:-0.017px;">23-Jun-2008 11:48:29</div>
<div class="t" id="r4c" style="right:781.5px;top:680px;letter-spacing:-0.227px;">-146.4kcal/mol</div>
<div class="t" id="r4d" style="right:696px;top:680px;letter-spacing:-0.108px;">3.92E-17</div>
<div class="row" style="top:695px;background:#f0f0f0;"></div>
<div class="vs" style="left:108px;top:695px;height:16px;background:#e6e6e6;"></div>
<div class="vs" style="left:250px;top:695px;height:16px;background:#e6e6e6;"></div>
<div class="vs" style="left:336px;top:695px;height:16px;background:#e6e6e6;"></div>
<div class="t" id="r5a" style="left:7px;top:696px;letter-spacing:-0.155px;">ΔG = -146,4kcal/mol</div>
<div class="t" id="r5b" style="left:112px;top:696px;letter-spacing:-0.017px;">23-Jun-2008 11:48:29</div>
<div class="t" id="r5c" style="right:781.5px;top:696px;letter-spacing:-0.227px;">-146.4kcal/mol</div>
<div class="t" id="r5d" style="right:696px;top:696px;letter-spacing:-0.108px;">3.92E-17</div>
<div class="row" style="top:711px;background:#fff;"></div>
<div class="vs" style="left:108px;top:711px;height:16px;background:#e6e6e6;"></div>
<div class="vs" style="left:250px;top:711px;height:16px;background:#e6e6e6;"></div>
<div class="vs" style="left:336px;top:711px;height:16px;background:#e6e6e6;"></div>
<div class="t" id="r6a" style="left:7px;top:712px;letter-spacing:-0.155px;">ΔG = -146,4kcal/mol</div>
<div class="t" id="r6b" style="left:112px;top:712px;letter-spacing:-0.017px;">23-Jun-2008 11:48:29</div>
<div class="t" id="r6c" style="right:781.5px;top:712px;letter-spacing:-0.227px;">-146.4kcal/mol</div>
<div class="t" id="r6d" style="right:696px;top:712px;letter-spacing:-0.108px;">3.92E-17</div>
<div class="row" style="top:727px;background:#f0f0f0;"></div>
<div class="vs" style="left:108px;top:727px;height:16px;background:#e6e6e6;"></div>
<div class="vs" style="left:250px;top:727px;height:16px;background:#e6e6e6;"></div>
<div class="vs" style="left:336px;top:727px;height:16px;background:#e6e6e6;"></div>
<div class="t" id="r7a" style="left:7px;top:728px;letter-spacing:-0.155px;">ΔG = -146,3kcal/mol</div>
<div class="t" id="r7b" style="left:112px;top:728px;letter-spacing:-0.017px;">23-Jun-2008 11:48:29</div>
<div class="t" id="r7c" style="right:781.5px;top:728px;letter-spacing:-0.227px;">-146.3kcal/mol</div>
<div class="t" id="r7d" style="right:696px;top:728px;letter-spacing:-0.108px;">3.33E-17</div>
<div class="row" style="top:743px;background:#fff;"></div>
<div class="vs" style="left:108px;top:743px;height:16px;background:#e6e6e6;"></div>
<div class="vs" style="left:250px;top:743px;height:16px;background:#e6e6e6;"></div>
<div class="vs" style="left:336px;top:743px;height:16px;background:#e6e6e6;"></div>
<div class="t" id="r8a" style="left:7px;top:744px;letter-spacing:-0.155px;">ΔG = -146,3kcal/mol</div>
<div class="t" id="r8b" style="left:112px;top:744px;letter-spacing:-0.017px;">23-Jun-2008 11:48:29</div>
<div class="t" id="r8c" style="right:781.5px;top:744px;letter-spacing:-0.227px;">-146.3kcal/mol</div>
<div class="t" id="r8d" style="right:696px;top:744px;letter-spacing:-0.108px;">3.33E-17</div>
<div class="row" style="top:759px;background:#f0f0f0;"></div>
<div class="vs" style="left:108px;top:759px;height:16px;background:#e6e6e6;"></div>
<div class="vs" style="left:250px;top:759px;height:16px;background:#e6e6e6;"></div>
<div class="vs" style="left:336px;top:759px;height:16px;background:#e6e6e6;"></div>
<div class="t" id="r9a" style="left:7px;top:760px;letter-spacing:-0.155px;">ΔG = -146,3kcal/mol</div>
<div class="t" id="r9b" style="left:112px;top:760px;letter-spacing:-0.017px;">23-Jun-2008 11:48:29</div>
<div class="t" id="r9c" style="right:781.5px;top:760px;letter-spacing:-0.227px;">-146.3kcal/mol</div>
<div class="t" id="r9d" style="right:696px;top:760px;letter-spacing:-0.108px;">3.33E-17</div>
<div class="row" style="top:775px;background:#fff;"></div>
<div class="vs" style="left:108px;top:775px;height:16px;background:#e6e6e6;"></div>
<div class="vs" style="left:250px;top:775px;height:16px;background:#e6e6e6;"></div>
<div class="vs" style="left:336px;top:775px;height:16px;background:#e6e6e6;"></div>
<div class="t" id="r10a" style="left:7px;top:776px;letter-spacing:-0.155px;">ΔG = -146,3kcal/mol</div>
<div class="t" id="r10b" style="left:112px;top:776px;letter-spacing:-0.017px;">23-Jun-2008 11:48:29</div>
<div class="t" id="r10c" style="right:781.5px;top:776px;letter-spacing:-0.227px;">-146.3kcal/mol</div>
<div class="t" id="r10d" style="right:696px;top:776px;letter-spacing:-0.108px;">3.33E-17</div>
<div class="a" style="left:427px;top:588px;width:683px;height:309px;background:#b4b4b4;"></div>
<div class="a" style="left:428px;top:588px;width:682px;height:1px;background:#696969;"></div>
<div class="a" style="left:428px;top:588px;width:1px;height:309px;background:#696969;"></div>
<div class="a" style="left:429px;top:590px;width:680px;height:306px;background:#fff;"></div>
<div class="a" style="left:427px;top:588px;width:1px;height:309px;background:#8c8c8c;"></div>
<div class="a" style="left:1109px;top:589px;width:1px;height:308px;background:#828790;"></div>
<div class="a" style="left:429px;top:896px;width:681px;height:1px;background:#828790;"></div>
<div class="dv" style="left:437px;top:609px;height:287px;"></div>
<div class="dv" style="left:456px;top:628px;height:47px;"></div>
<div class="dv" style="left:475px;top:685px;height:211px;"></div>
<div class="dv" style="left:494px;top:742px;height:142px;"></div>
<div class="dv" style="left:513px;top:761px;height:105px;"></div>
<svg class="a" style="left:429.5px;top:591px;color:#1f5fc8" width="16" height="16"><use href="#db"/></svg>
<div class="t" id="t0" style="left:448.3px;top:591.5px;letter-spacing:-0.064px;">Elements of structure 'ΔG = -146,7kcal/mol': ΔG = -146.7kcal/mol</div>
<svg class="a" style="left:448px;top:610.5px;color:#1f5fc8" width="16" height="16"><use href="#bif"/></svg>
<div class="t" id="t1" style="left:466.8px;top:610.5px;letter-spacing:-0.005px;">Stem with bifurcation at 1..484: ΔG = -142.0kcal/mol</div>
<div class="dh" style="left:443px;top:618px;width:5px;"></div>
<div class="ex" style="left:433px;top:614px;"><b></b></div>
<svg class="a" style="left:467px;top:629.5px;color:#1f5fc8" width="16" height="16"><use href="#stembp"/></svg>
<div class="t" id="t2" style="left:485.8px;top:629.5px;letter-spacing:0.069px;">Stem base pairs at join(1..3,6..8,477..479,482..484): ΔG = -6.3kcal/mol</div>
<div class="dh" style="left:462px;top:637px;width:5px;"></div>
<div class="ex" style="left:452px;top:633px;"><b></b><i></i></div>
<svg class="a" style="left:467px;top:648.5px;color:#1f5fc8" width="16" height="16"><use href="#intloop"/></svg>
<div class="t" id="t3" style="left:485.8px;top:648.5px;letter-spacing:0.081px;">Interior loop at join(4..5,480..481): ΔG = -2.5kcal/mol</div>
<div class="dh" style="left:457px;top:656px;width:10px;"></div>
<svg class="a" style="left:467px;top:667.5px;color:#1f5fc8" width="16" height="16"><use href="#multi"/></svg>
<div class="t" id="t4" style="left:485.8px;top:667.5px;letter-spacing:-0.038px;">Multi loop at 8..477: ΔG = -133.2kcal/mol</div>
<div class="dh" style="left:462px;top:675px;width:5px;"></div>
<div class="ex" style="left:452px;top:671px;"><b></b></div>
<svg class="a" style="left:486px;top:686.5px;color:#1f5fc8" width="16" height="16"><use href="#multibp"/></svg>
<div class="t" id="t5" style="left:504.8px;top:686.5px;letter-spacing:-0.011px;">Multi loop base pairs at join(8,477,12,438,445,474): ΔG = 5.1kcal/mol</div>
<div class="dh" style="left:481px;top:694px;width:5px;"></div>
<div class="ex" style="left:471px;top:690px;"><b></b><i></i></div>
<svg class="a" style="left:486px;top:705.5px;color:#1f5fc8" width="16" height="16"><use href="#multiarc"/></svg>
<div class="t" id="t6" style="left:504.8px;top:705.5px;letter-spacing:0.062px;">Multi loop arcs at join(9..11,439..444,475..476): ΔG = -2.2kcal/mol</div>
<div class="dh" style="left:481px;top:713px;width:5px;"></div>
<div class="ex" style="left:471px;top:709px;"><b></b><i></i></div>
<svg class="a" style="left:486px;top:724.5px;color:#1f5fc8" width="16" height="16"><use href="#bif"/></svg>
<div class="t" id="t7" style="left:504.8px;top:724.5px;letter-spacing:-0.005px;">Stem with bifurcation at 12..438: ΔG = -132.6kcal/mol</div>
<div class="dh" style="left:481px;top:732px;width:5px;"></div>
<div class="ex" style="left:471px;top:728px;"><b></b></div>
<svg class="a" style="left:505px;top:743.5px;color:#1f5fc8" width="16" height="16"><use href="#stembp"/></svg>
<div class="t" id="t8" style="left:523.8px;top:743.5px;letter-spacing:0.016px;">Stem base pairs at join(12..18,432..438): ΔG = -11.8kcal/mol</div>
<div class="dh" style="left:500px;top:751px;width:5px;"></div>
<div class="ex" style="left:490px;top:747px;"><b></b></div>
<svg class="a" style="left:524px;top:762px;color:#1f5fc8" width="16" height="16"><use href="#stack"/></svg>
<div class="t" id="t9" style="left:542.8px;top:762.5px;letter-spacing:-0.042px;">Stacking of C-G pair at (12, 438) and U-A pair at (13, 437): ΔG = -2.1kcal/mol</div>
<div class="dh" style="left:514px;top:770px;width:10px;"></div>
<svg class="a" style="left:524px;top:781px;color:#1f5fc8" width="16" height="16"><use href="#stack"/></svg>
<div class="t" id="t10" style="left:542.8px;top:781.5px;letter-spacing:-0.042px;">Stacking of U-A pair at (13, 437) and C-G pair at (14, 436): ΔG = -2.4kcal/mol</div>
<div class="dh" style="left:514px;top:789px;width:10px;"></div>
<svg class="a" style="left:524px;top:800px;color:#1f5fc8" width="16" height="16"><use href="#stack"/></svg>
<div class="t" id="t11" style="left:542.8px;top:800.5px;letter-spacing:-0.042px;">Stacking of C-G pair at (14, 436) and A-U pair at (15, 435): ΔG = -2.1kcal/mol</div>
<div class="dh" style="left:514px;top:808px;width:10px;"></div>
<svg class="a" style="left:524px;top:819px;color:#1f5fc8" width="16" height="16"><use href="#stack"/></svg>
<div class="t" id="t12" style="left:542.8px;top:819.5px;letter-spacing:-0.042px;">Stacking of A-U pair at (15, 435) and G-U pair at (16, 434): ΔG = -0.6kcal/mol</div>
<div class="dh" style="left:514px;top:827px;width:10px;"></div>
<svg class="a" style="left:524px;top:838px;color:#1f5fc8" width="16" height="16"><use href="#stack"/></svg>
<div class="t" id="t13" style="left:542.8px;top:838.5px;letter-spacing:-0.066px;">Stacking of G-U pair at (16, 434) and C-G pair at (17, 433): ΔG = -2.5kcal/mol</div>
<div class="dh" style="left:514px;top:846px;width:10px;"></div>
<svg class="a" style="left:524px;top:857px;color:#1f5fc8" width="16" height="16"><use href="#stack"/></svg>
<div class="t" id="t14" style="left:542.8px;top:857.5px;letter-spacing:-0.042px;">Stacking of C-G pair at (17, 433) and A-U pair at (18, 432): ΔG = -2.1kcal/mol</div>
<div class="dh" style="left:514px;top:865px;width:10px;"></div>
<svg class="a" style="left:505px;top:876.5px;color:#1f5fc8" width="16" height="16"><use href="#multi"/></svg>
<div class="t" id="t15" style="left:523.8px;top:876.5px;letter-spacing:-0.028px;">Multi loop at 18..432: ΔG = -120.8kcal/mol</div>
<div class="dh" style="left:500px;top:884px;width:5px;"></div>
<div class="ex" style="left:490px;top:880px;"><b></b><i></i></div>
<div class="sb" style="left:1093px;top:590px;width:16px;height:306px;background:#f0f0f0;"></div>
<div class="th" style="left:1093px;top:608px;width:15px;height:159px;"></div>
<div class="gr" style="left:1097px;top:684px;width:7px;"></div>
<div class="gr" style="left:1097px;top:687px;width:7px;"></div>
<div class="gr" style="left:1097px;top:690px;width:7px;"></div>
<svg class="a" style="left:1097px;top:596px" width="9" height="6"><path d="M0.300 5.300L4.400 0.600 8.500 5.300z" fill="#3c3c3c"/></svg>
<svg class="a" style="left:1097px;top:885px" width="9" height="6"><path d="M0.300 0.700L4.400 5.400 8.500 0.700z" fill="#3c3c3c"/></svg>
<div class="a" style="left:125px;top:900px;width:16px;height:16px;background:#bdbdbd;border:1px solid #3399ff;"></div>
<svg class="a" style="left:4px;top:901px" width="19" height="17"><use href="#act"/></svg>
<svg class="a" style="left:26px;top:901px" width="16" height="16"><use href="#ring"/></svg>
<svg class="a" style="left:46px;top:901px" width="16" height="16"><use href="#tblarrow"/></svg>
<svg class="a" style="left:66px;top:901px" width="16" height="16"><use href="#doc"/></svg>
<svg class="a" style="left:86px;top:901px" width="16" height="16"><use href="#redblue"/></svg>
<svg class="a" style="left:106px;top:901px;color:#14149c" width="16" height="16"><use href="#db"/></svg>
<svg class="a" style="left:126px;top:902px" width="16" height="16"><use href="#tbldb"/></svg>
<svg class="a" style="left:146px;top:901px" width="16" height="16"><use href="#clock"/></svg>
<svg class="a" style="left:166px;top:901px" width="16" height="16"><use href="#check"/></svg>
<div class="ln" style="left:2px;top:922px;width:1112px;height:1px;"></div>
</body>
</html>
